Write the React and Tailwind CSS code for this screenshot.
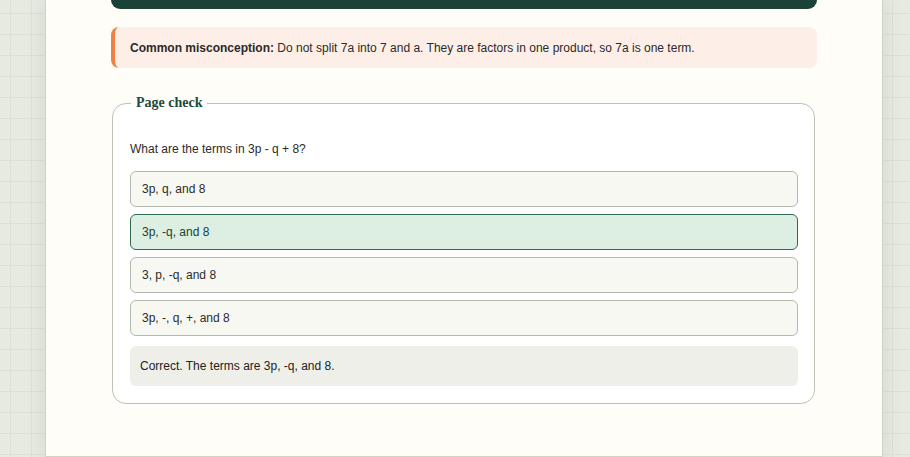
import { useState } from "react";

const OPTIONS = ["3p, q, and 8", "3p, -q, and 8", "3, p, -q, and 8", "3p, -, q, +, and 8"];

function PageCheck() {
  const [picked, setPicked] = useState(1);

  return (
    <fieldset className="mt-[25px] ml-px mr-[2px] rounded-[14px] border border-[#bcc2b6] bg-white pl-[17px] pr-[16px] pb-[17px]">
      <legend className="ml-[1px] px-[5px] font-['Liberation_Serif',serif] text-[14px] font-bold leading-[20px] text-[#1d4a3a]">
        Page check
      </legend>
      <p className="mt-[29px] text-[12px] leading-[14px] text-[#2b2b2b]">What are the terms in 3p - q + 8?</p>
      <div className="mt-[15px] flex flex-col gap-[7px]">
        {OPTIONS.map((label, i) => (
          <button
            key={label}
            type="button"
            onClick={() => setPicked(i)}
            className={
              i === picked
                ? "flex h-[36px] items-center rounded-[6px] border border-[#2f6b4e] bg-[#ddefe3] px-[11px] text-left text-[12px] text-[#23402f]"
                : "flex h-[36px] items-center rounded-[6px] border border-[#b4b9ae] bg-[#f7f8f2] px-[11px] text-left text-[12px] text-[#2b2b2b]"
            }
          >
            {label}
          </button>
        ))}
      </div>
      {picked === 1 ? (
        <div className="mt-[10px] flex h-[40px] items-center rounded-[6px] bg-[#efefea] pl-[10px] text-[12px] text-[#222]">
          Correct. The terms are 3p, -q, and 8.
        </div>
      ) : (
        <div className="mt-[10px] flex h-[40px] items-center rounded-[6px] bg-[#efefea] pl-[10px] text-[12px] text-[#222]">
          Not quite. The terms are 3p, -q, and 8.
        </div>
      )}
    </fieldset>
  );
}

export default function App() {
  return (
    <div className="h-[457px] overflow-hidden bg-[#e7eae1] bg-[linear-gradient(#dce0d5_1px,transparent_1px),linear-gradient(90deg,#dce0d5_1px,transparent_1px)] bg-[length:21px_21px] bg-[position:10px_13px] font-['Liberation_Sans',Arial,sans-serif]">
      <div className="ml-[45px] h-[457px] w-[838px] border-x border-b border-[#cfd3c8] bg-[#fffdf7] px-[65px] shadow-[0_0_18px_rgba(60,70,50,0.12)]">
        <div className="h-[9px] rounded-b-[12px] bg-[#1a4237]" />
        <div className="mt-[18px] flex h-[41px] items-center rounded-[8px] border-l-4 border-[#ef8146] bg-[#fdefe7] pl-[15px] text-[12px] text-[#2a2a2a]">
          <p>
            <strong className="font-bold">Common misconception:</strong> Do not split 7a into 7 and a. They are factors in one
            product, so 7a is one term.
          </p>
        </div>
        <PageCheck />
      </div>
    </div>
  );
}
